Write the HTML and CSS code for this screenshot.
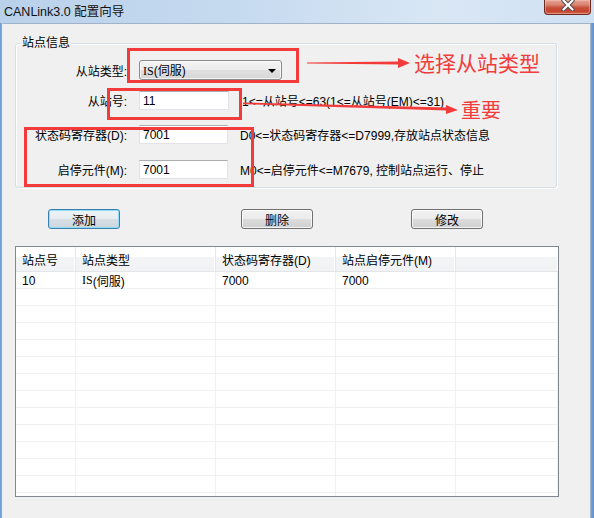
FILE: index.html
```html
<!DOCTYPE html>
<html lang="zh-CN">
<head>
<meta charset="utf-8">
<title>CANLink3.0 配置向导</title>
<link rel="stylesheet" href="styles.css">
</head>
<body>
<div class="window">
  <div class="titlebar">
    <span class="title">CANLink3.0 配置向导</span>
    <div class="close">
      <svg width="14" height="11" viewBox="0 0 14 11">
        <path d="M2.5 0.5 L11.5 9.5 M11.5 0.5 L2.5 9.5" stroke="#4a4a4a" stroke-width="4.2" stroke-linecap="round"/>
        <path d="M2.5 0.5 L11.5 9.5 M11.5 0.5 L2.5 9.5" stroke="#ffffff" stroke-width="2.2" stroke-linecap="round"/>
      </svg>
    </div>
  </div>
  <div class="client">
    <div class="group">
      <div class="legend">站点信息</div>
      <div class="row r1">
        <label class="lbl">从站类型:</label>
        <div class="combo"><span><span class="ser">IS</span>(伺服)</span><span class="caret"></span></div>
      </div>
      <div class="row r2">
        <label class="lbl">从站号:</label>
        <div class="tb tb-a">11</div>
        <span class="hint hint-a">1&lt;=从站号&lt;=63(1&lt;=从站号(EM)&lt;=31)</span>
      </div>
      <div class="row r3">
        <label class="lbl">状态码寄存器(D):</label>
        <div class="tb">7001</div>
        <span class="hint">D0&lt;=状态码寄存器&lt;=D7999,存放站点状态信息</span>
      </div>
      <div class="row r4">
        <label class="lbl">启停元件(M):</label>
        <div class="tb">7001</div>
        <span class="hint">M0&lt;=启停元件&lt;=M7679, 控制站点运行、停止</span>
      </div>
    </div>

    <div class="buttons">
      <button class="btn btn-default b-add">添加</button>
      <button class="btn b-del">删除</button>
      <button class="btn b-mod">修改</button>
    </div>

    <div class="listview">
      <div class="lv-head">
        <div class="hc">站点号</div>
        <div class="hc">站点类型</div>
        <div class="hc">状态码寄存器(D)</div>
        <div class="hc">站点启停元件(M)</div>
        <div class="hc hc-last"></div>
      </div>
      <div class="lv-row"><div class="c">10</div><div class="c"><span class="ser">IS</span>(伺服)</div><div class="c">7000</div><div class="c">7000</div><div class="c"></div></div>
      <div class="lv-row"><div class="c"></div><div class="c"></div><div class="c"></div><div class="c"></div><div class="c"></div></div>
      <div class="lv-row"><div class="c"></div><div class="c"></div><div class="c"></div><div class="c"></div><div class="c"></div></div>
      <div class="lv-row"><div class="c"></div><div class="c"></div><div class="c"></div><div class="c"></div><div class="c"></div></div>
      <div class="lv-row"><div class="c"></div><div class="c"></div><div class="c"></div><div class="c"></div><div class="c"></div></div>
      <div class="lv-row"><div class="c"></div><div class="c"></div><div class="c"></div><div class="c"></div><div class="c"></div></div>
      <div class="lv-row"><div class="c"></div><div class="c"></div><div class="c"></div><div class="c"></div><div class="c"></div></div>
      <div class="lv-row"><div class="c"></div><div class="c"></div><div class="c"></div><div class="c"></div><div class="c"></div></div>
      <div class="lv-row"><div class="c"></div><div class="c"></div><div class="c"></div><div class="c"></div><div class="c"></div></div>
      <div class="lv-row"><div class="c"></div><div class="c"></div><div class="c"></div><div class="c"></div><div class="c"></div></div>
      <div class="lv-row"><div class="c"></div><div class="c"></div><div class="c"></div><div class="c"></div><div class="c"></div></div>
      <div class="lv-row"><div class="c"></div><div class="c"></div><div class="c"></div><div class="c"></div><div class="c"></div></div>
      <div class="lv-row"><div class="c"></div><div class="c"></div><div class="c"></div><div class="c"></div><div class="c"></div></div>
      <div class="lv-row"><div class="c"></div><div class="c"></div><div class="c"></div><div class="c"></div><div class="c"></div></div>
    </div>
  </div>

  <!-- annotations drawn over the screenshot -->
  <div class="mark mark-type"></div>
  <div class="mark mark-id"></div>
  <div class="mark mark-regs"></div>
  <svg class="arrows" width="594" height="518" viewBox="0 0 594 518">
    <polygon points="307,62.6 399,61.6 399,64.4 307,63.4" fill="#f33b3b"/>
    <polygon points="398,58 410,63 398,68" fill="#f33b3b"/>
    <polygon points="243,102.4 447,107.6 447,110.4 243,104.2" fill="#f33b3b"/>
    <polygon points="446,105 458,110 446,114" fill="#f33b3b"/>
  </svg>
  <div class="note note-type">选择从站类型</div>
  <div class="note note-imp">重要</div>
</div>
</body>
</html>
```

FILE: styles.css
```css
* { box-sizing: border-box; }

html, body {
  margin: 0;
  padding: 0;
}

body {
  width: 594px;
  height: 518px;
  overflow: hidden;
  font-family: "Liberation Sans", "Noto Sans CJK SC", sans-serif;
  font-size: 12px;
  color: #000;
}

.window {
  position: relative;
  width: 594px;
  height: 518px;
  display: flex;
  flex-direction: column;
  background: linear-gradient(to right, #9dbde3 0, #4f86c9 1px, #aac7e8 2px, #c3d8ef 20%, #d3e3f4 70%, #c6dbf0 98%, #5d8fcc 100%);
}

/* ---------- title bar ---------- */
.titlebar {
  height: 23px;
  flex: none;
  display: flex;
  align-items: center;
  justify-content: space-between;
  padding-left: 4px;
  background: linear-gradient(to right, #b9d1ea 0%, #c6daef 40%, #d9e7f5 75%, #cfe0f3 100%);
}

.title {
  font-family: "Liberation Sans", "Noto Sans CJK SC", sans-serif;
  font-size: 12.5px;
  color: #111;
  line-height: 14px;
}

.close {
  align-self: flex-start;
  width: 47px;
  height: 15px;
  margin-right: 3px;
  border: 1px solid #6b2a22;
  border-top: none;
  border-radius: 0 0 4px 4px;
  background: linear-gradient(#e4a796 0%, #d8826e 35%, #c8503a 55%, #c6432d 80%, #d26a4f 100%);
  box-shadow: inset 0 0 0 1px rgba(255, 200, 190, 0.45);
  display: flex;
  justify-content: center;
  align-items: flex-start;
}

.close svg { display: block; }

/* ---------- client area ---------- */
.client {
  flex: 1;
  margin: 0 3px 0 2px;
  border: 1px solid #9fb3c9;
  border-bottom: none;
  border-left-color: #e9f0f8;
  background: #f0f0f0;
  overflow: hidden;
}

.group {
  width: 542px;
  margin: 19px 0 0 12px;
  border: 1px solid #d5dfe5;
  border-radius: 3px;
  box-shadow: inset 1px 1px 0 #fff, 1px 1px 0 #fff;
  padding-bottom: 8px;
}

.legend {
  width: max-content;
  margin: -8px 0 0 5px;
  padding: 0 1px;
  line-height: 14px;
  background: #f0f0f0;
}

.row {
  display: flex;
  align-items: center;
  height: 19px;
}

.r1 { margin-top: 10px; height: 20px; }
.r2 { margin-top: 11px; }
.r3 { margin-top: 15px; }
.r4 { margin-top: 16px; }

.lbl {
  width: 111px;
  margin-right: 12px;
  text-align: right;
  white-space: nowrap;
}

.combo {
  width: 143px;
  height: 20px;
  display: flex;
  align-items: center;
  justify-content: space-between;
  padding: 0 5px 0 3px;
  border: 1px solid #8b8b8b;
  border-radius: 3px;
  background: linear-gradient(#f3f3f3 0%, #ececec 50%, #e0e0e0 51%, #d6d6d6 100%);
  box-shadow: inset 0 0 0 1px rgba(255, 255, 255, 0.7);
}

.caret {
  width: 0;
  height: 0;
  border-left: 4px solid transparent;
  border-right: 4px solid transparent;
  border-top: 4px solid #000;
  margin-top: 1px;
}

.ser { font-family: "Liberation Serif", "Noto Sans CJK SC", serif; }

.tb {
  width: 89px;
  height: 19px;
  padding-left: 3px;
  display: flex;
  align-items: center;
  background: #fff;
  border: 1px solid #e2e3ea;
  border-top-color: #abadb3;
}

.tb-a { width: 90px; }

.hint {
  margin-left: 12px;
  white-space: nowrap;
}

.hint-a { margin-left: 13px; }

/* ---------- buttons ---------- */
.buttons {
  display: flex;
  margin-top: 21px;
  height: 20px;
}

.btn {
  width: 72px;
  height: 20px;
  padding: 0;
  font-family: "Liberation Sans", "Noto Sans CJK SC", sans-serif;
  font-size: 12px;
  color: #000;
  border: 1px solid #707070;
  border-radius: 3px;
  background: linear-gradient(#f2f2f2 0%, #ebebeb 50%, #dddddd 51%, #cfcfcf 100%);
  box-shadow: inset 0 0 0 1px rgba(255, 255, 255, 0.75);
}

.btn-default {
  border-color: #3c7fb1;
  box-shadow: inset 0 0 0 1px #8fdcfb;
  background: linear-gradient(#eef3f6 0%, #e6ecf0 50%, #d8e0e6 51%, #cdd6dd 100%);
}

.b-add { margin-left: 45px; }
.b-del { margin-left: 121px; }
.b-mod { margin-left: 98px; }

/* ---------- list view ---------- */
.listview {
  width: 544px;
  height: 251px;
  margin: 17px 0 0 12px;
  border: 1px solid #828790;
  background: #fff;
  overflow: hidden;
}

.lv-head,
.lv-row {
  display: grid;
  grid-template-columns: 60px 140px 120px 120px 1fr;
}

.lv-head {
  height: 25px;
  border-bottom: 1px solid #e3e5e8;
  background: linear-gradient(#ffffff 0%, #ffffff 42%, #f3f4f6 43%, #f1f2f4 100%);
}

.hc {
  display: flex;
  align-items: center;
  padding-left: 6px;
  border-right: 1px solid #e3e8ee;
  box-shadow: inset -1px 0 0 #fff;
  white-space: nowrap;
}

.hc-last { border-right: none; }

.lv-row {
  height: 17px;
  border-bottom: 1px solid #f0f0f0;
}

.c {
  display: flex;
  align-items: center;
  padding-left: 6px;
  border-right: 1px solid #f0f0f0;
  white-space: nowrap;
}

/* ---------- annotations ---------- */
.mark {
  position: absolute;
  border: 3px solid #f33b3b;
}

.mark-type { left: 127px; top: 48px; width: 172px; height: 35px; }
.mark-id   { left: 107px; top: 88px; width: 135px; height: 32px; }
.mark-regs { left: 24px;  top: 127px; width: 230px; height: 60px; }

.arrows {
  position: absolute;
  left: 0;
  top: 0;
  pointer-events: none;
}

.note {
  position: absolute;
  color: #f23c3c;
  font-family: "Noto Sans CJK SC", sans-serif;
  white-space: nowrap;
}

.note-type { left: 414px; top: 52px; font-size: 21px; line-height: 21px; }
.note-imp  { left: 461px; top: 100px; font-size: 20px; line-height: 20px; }
```
